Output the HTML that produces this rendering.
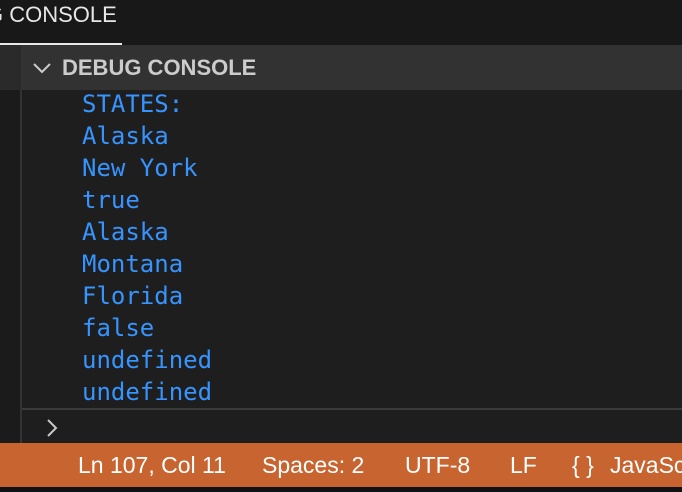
<!DOCTYPE html><html><head><style>
body{margin:0;width:682px;height:492px;overflow:hidden;background:#1e1e1e;position:relative;font-family:"Liberation Sans",sans-serif}
div{position:absolute}
.s{top:451px;color:#fff;font-size:23px;line-height:28px;white-space:pre}
</style></head><body>
<div style="left:0;top:0;width:682px;height:45px;background:#181818"></div>
<div style="left:0;top:0;height:30px;line-height:30px;color:#e7e7e7;font-size:22px;white-space:pre;overflow:hidden;width:130px"><span style="margin-left:-14px">G CONSOLE</span></div>
<div style="left:0;top:43px;width:122px;height:2px;background:#e7e7e7"></div>
<div style="left:0;top:45px;width:21px;height:398px;background:#1b1b1b"></div>
<div style="left:20px;top:45px;width:2px;height:398px;background:#333"></div>
<div style="left:0;top:45px;width:21px;height:45px;background:#2a2a2a"></div>
<div style="left:22px;top:45px;width:660px;height:45px;background:#323232"></div>
<svg style="position:absolute;left:32px;top:61px" width="20" height="14"><path d="M2 3 L10 11 L18 3" stroke="#ccc" stroke-width="2" fill="none"/></svg>
<div style="left:62px;top:55px;line-height:26px;color:#cccccc;font-size:22px;font-weight:bold">DEBUG CONSOLE</div>
<div style="left:82px;top:88px;color:#3794ff;font-family:'DejaVu Sans Mono','Liberation Mono',monospace;font-size:24px;line-height:32px;white-space:pre">STATES:
Alaska
New York
true
Alaska
Montana
Florida
false
undefined
undefined</div>
<div style="left:22px;top:408px;width:660px;height:2px;background:#3a3a3a"></div>
<svg style="position:absolute;left:44px;top:417px" width="16" height="22"><path d="M4 3 L12 11 L4 19" stroke="#c8c8c8" stroke-width="2" fill="none"/></svg>
<div style="left:0;top:443px;width:682px;height:44px;background:#c86430;overflow:hidden"></div>
<div style="left:0;top:487px;width:682px;height:5px;background:#111"></div>
<div class="s" style="left:78px">Ln 107, Col 11</div>
<div class="s" style="left:262px">Spaces: 2</div>
<div class="s" style="left:405px">UTF-8</div>
<div class="s" style="left:510px">LF</div>
<div class="s" style="left:572px">{ }</div>
<div class="s" style="left:610px;width:72px;overflow:hidden">JavaSc</div>
</body></html>
